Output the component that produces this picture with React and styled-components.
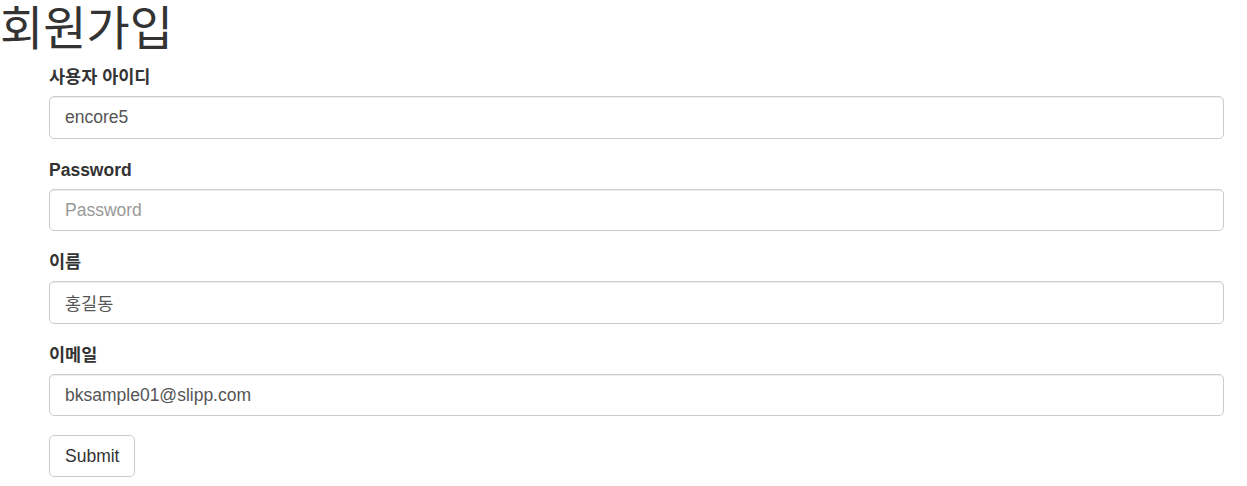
import React from "react";
import styled, { createGlobalStyle } from "styled-components";

const GlobalStyle = createGlobalStyle`
  * {
    box-sizing: border-box;
  }
  body {
    margin: 0;
    background: #fff;
    color: #333;
    font-family: "Liberation Sans", Arial, "Noto Sans CJK KR", sans-serif;
    font-size: 17.5px;
    line-height: 25px;
  }
`;

const Title = styled.h1`
  margin: 0 0 15.5px;
  font-family: "Noto Sans CJK KR", sans-serif;
  font-size: 47px;
  font-weight: 400;
  line-height: 49.5px;
  color: #333;
`;

const Form = styled.form`
  padding: 0 23px 0 49px;
`;

const FormGroup = styled.div`
  margin-bottom: 18.75px;
`;

const Label = styled.label`
  display: block;
  margin-bottom: 6.25px;
  font-weight: 700;
  font-size: 17.5px;
  line-height: 25px;
  font-family: "Liberation Sans", Arial, "Noto Sans CJK KR", sans-serif;
`;

const Input = styled.input`
  display: block;
  width: 100%;
  height: 42.5px;
  padding: 7.5px 15px;
  font-size: 17.5px;
  line-height: 25px;
  color: #555;
  font-family: "Liberation Sans", Arial, "Noto Sans CJK KR", sans-serif;
  background: #fff;
  border: 1px solid #ccc;
  border-radius: 5px;
  box-shadow: inset 0 1px 1px rgba(0, 0, 0, 0.075);
  outline: none;

  &::placeholder {
    color: #999;
  }
`;

const Button = styled.button`
  display: inline-block;
  padding: 7.5px 15px;
  font-size: 17.5px;
  line-height: 25px;
  font-family: "Liberation Sans", Arial, sans-serif;
  color: #333;
  background: #fff;
  border: 1px solid #ccc;
  border-radius: 5px;
  cursor: pointer;
`;

const fields = [
  { id: "userId", label: "사용자 아이디", type: "text", value: "encore5" },
  { id: "password", label: "Password", type: "password", placeholder: "Password" },
  { id: "name", label: "이름", type: "text", value: "홍길동" },
  { id: "email", label: "이메일", type: "email", value: "bksample01@slipp.com" },
];

export default function App() {
  return (
    <>
      <GlobalStyle />
      <Title>회원가입</Title>
      <Form onSubmit={(e) => e.preventDefault()}>
        {fields.map((f) => (
          <FormGroup key={f.id}>
            <Label htmlFor={f.id}>{f.label}</Label>
            <Input
              id={f.id}
              type={f.type}
              defaultValue={f.value}
              placeholder={f.placeholder}
            />
          </FormGroup>
        ))}
        <Button type="submit">Submit</Button>
      </Form>
    </>
  );
}
